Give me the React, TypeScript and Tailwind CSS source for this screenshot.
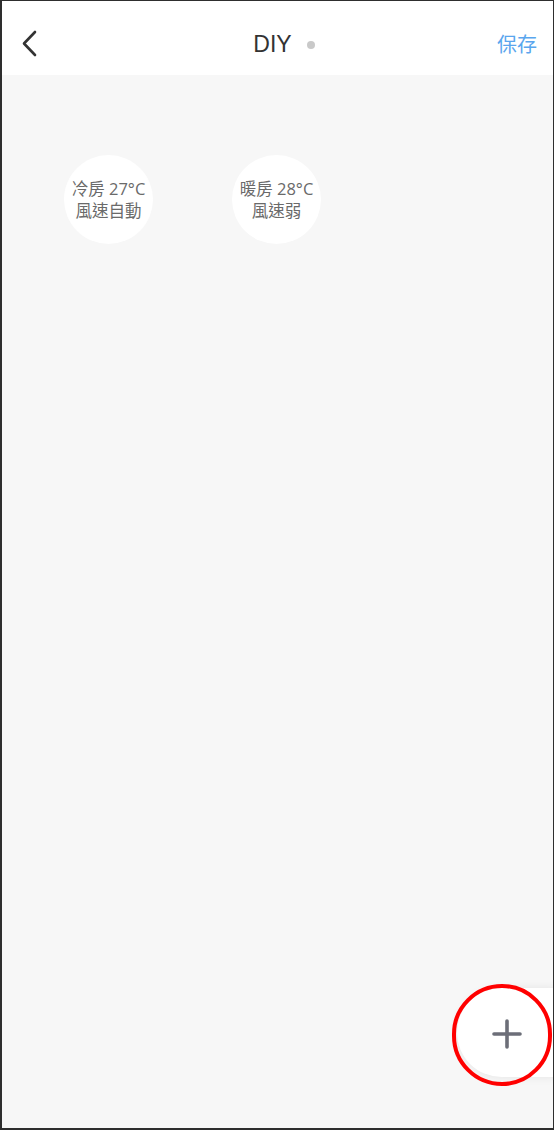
import React from "react";

const font = '"Liberation Sans", "Noto Sans CJK TC", sans-serif';
const circleFont = '"Open Sans", "Noto Sans CJK TC", sans-serif';

function ModeCircle({ l1, l2 }: { l1: string; l2: string }) {
  return (
    <div
      className="flex h-[89px] w-[89px] flex-col items-center justify-center rounded-full bg-white text-[16.5px] leading-[22px] text-[#6a6a6a]"
      style={{ fontFamily: circleFont }}
    >
      <span className="whitespace-nowrap">{l1}</span>
      <span className="whitespace-nowrap">{l2}</span>
    </div>
  );
}

export default function App() {
  return (
    <div
      className="relative flex h-[1130px] w-[554px] flex-col overflow-hidden border border-l-2 border-b-2 border-[#2e2e2e] bg-[#f7f7f7]"
      style={{ fontFamily: font }}
    >
      <header className="flex h-[74px] shrink-0 items-center justify-between bg-white pl-[19px] pr-[16px] pt-[13px]">
        <svg width="20" height="30" viewBox="0 0 20 30" className="mt-[-2px]">
          <polyline
            points="14,3 3,14.5 14,26"
            fill="none"
            stroke="#333333"
            strokeWidth="2.6"
            strokeLinecap="round"
            strokeLinejoin="round"
          />
        </svg>
        <div className="ml-[30px] flex items-center">
          <span className="text-[23px] leading-none text-[#333333]">DIY</span>
          <span className="ml-[15px] h-[8px] w-[8px] rounded-full bg-[#c9c9c9]" />
        </div>
        <span className="text-[20px] leading-none text-[#5aa6ee]">保存</span>
      </header>
      <main className="flex flex-1 items-start gap-[79px] pl-[62px] pt-[80px]">
        <ModeCircle l1="冷房 27°C" l2="風速自動" />
        <ModeCircle l1="暖房 28°C" l2="風速弱" />
      </main>

      <div className="absolute left-[455px] top-[987px] h-[89px] w-[100px] rounded-l-full bg-white shadow-[0_0_10px_rgba(0,0,0,0.08)]">
        <svg width="30" height="30" viewBox="0 0 30 30" className="absolute left-[35px] top-[31px]">
          <line x1="15" y1="2" x2="15" y2="28" stroke="#6c6e78" strokeWidth="3.6" strokeLinecap="round" />
          <line x1="2" y1="15" x2="28" y2="15" stroke="#6c6e78" strokeWidth="3.6" strokeLinecap="round" />
        </svg>
      </div>
      <div className="absolute left-[450px] top-[983px] h-[102px] w-[100px] rounded-full border-[4px] border-[#ff0000]" />
    </div>
  );
}
